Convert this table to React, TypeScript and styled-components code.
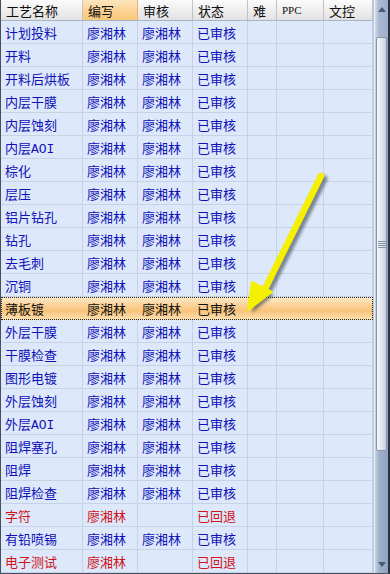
import React from 'react';
import styled, { createGlobalStyle, css } from 'styled-components';

const GlobalStyle = createGlobalStyle`
  html, body {
    margin: 0;
    padding: 0;
    background: #ffffff;
  }
  #root {
    width: 390px;
    height: 574px;
  }
`;

type Tone = 'blue' | 'red' | 'dark';

interface ProcessRow {
  name: string;
  writer: string;
  checker: string;
  status: string;
  tone: Tone;
}

const ROWS: ProcessRow[] = [
  { name: '计划投料', writer: '廖湘林', checker: '廖湘林', status: '已审核', tone: 'blue' },
  { name: '开料', writer: '廖湘林', checker: '廖湘林', status: '已审核', tone: 'blue' },
  { name: '开料后烘板', writer: '廖湘林', checker: '廖湘林', status: '已审核', tone: 'blue' },
  { name: '内层干膜', writer: '廖湘林', checker: '廖湘林', status: '已审核', tone: 'blue' },
  { name: '内层蚀刻', writer: '廖湘林', checker: '廖湘林', status: '已审核', tone: 'blue' },
  { name: '内层AOI', writer: '廖湘林', checker: '廖湘林', status: '已审核', tone: 'blue' },
  { name: '棕化', writer: '廖湘林', checker: '廖湘林', status: '已审核', tone: 'blue' },
  { name: '层压', writer: '廖湘林', checker: '廖湘林', status: '已审核', tone: 'blue' },
  { name: '铝片钻孔', writer: '廖湘林', checker: '廖湘林', status: '已审核', tone: 'blue' },
  { name: '钻孔', writer: '廖湘林', checker: '廖湘林', status: '已审核', tone: 'blue' },
  { name: '去毛刺', writer: '廖湘林', checker: '廖湘林', status: '已审核', tone: 'blue' },
  { name: '沉铜', writer: '廖湘林', checker: '廖湘林', status: '已审核', tone: 'blue' },
  { name: '薄板镀', writer: '廖湘林', checker: '廖湘林', status: '已审核', tone: 'dark' },
  { name: '外层干膜', writer: '廖湘林', checker: '廖湘林', status: '已审核', tone: 'blue' },
  { name: '干膜检查', writer: '廖湘林', checker: '廖湘林', status: '已审核', tone: 'blue' },
  { name: '图形电镀', writer: '廖湘林', checker: '廖湘林', status: '已审核', tone: 'blue' },
  { name: '外层蚀刻', writer: '廖湘林', checker: '廖湘林', status: '已审核', tone: 'blue' },
  { name: '外层AOI', writer: '廖湘林', checker: '廖湘林', status: '已审核', tone: 'blue' },
  { name: '阻焊塞孔', writer: '廖湘林', checker: '廖湘林', status: '已审核', tone: 'blue' },
  { name: '阻焊', writer: '廖湘林', checker: '廖湘林', status: '已审核', tone: 'blue' },
  { name: '阻焊检查', writer: '廖湘林', checker: '廖湘林', status: '已审核', tone: 'blue' },
  { name: '字符', writer: '廖湘林', checker: '', status: '已回退', tone: 'red' },
  { name: '有铅喷锡', writer: '廖湘林', checker: '廖湘林', status: '已审核', tone: 'blue' },
  { name: '电子测试', writer: '廖湘林', checker: '', status: '已回退', tone: 'red' },
];

const HEADERS = ['工艺名称', '编写', '审核', '状态', '难', 'PPC', '文控'];
const COLUMNS = '82px 55px 55px 55px 29px 47px 49px';

const toneColor: Record<Tone, string> = {
  blue: '#1010b8',
  red: '#d0121a',
  dark: '#111111',
};

const Frame = styled.div`
  position: relative;
  width: 390px;
  height: 574px;
  box-sizing: border-box;
  border-left: 1px solid #46505e;
  border-right: 2px solid #2c3440;
  border-bottom: 1px solid #46505e;
  display: flex;
  overflow: hidden;
  background: #dde9fb;
  font-family: 'Liberation Mono', 'Noto Sans CJK SC', sans-serif;
  font-size: 13px;
`;

const Grid = styled.div`
  flex: 1;
  display: flex;
  flex-direction: column;
  border-right: 1px solid #b8c6dc;
`;

const HeaderRow = styled.div`
  display: grid;
  grid-template-columns: ${COLUMNS};
  height: 21px;
  box-sizing: border-box;
  border-bottom: 1px solid #a9b4c2;
  background: linear-gradient(#fbfbfb, #ececec 60%, #e2e2e2);
`;

const HeaderCell = styled.div<{ $active?: boolean; $latin?: boolean }>`
  display: flex;
  align-items: center;
  padding-left: 5px;
  box-sizing: border-box;
  border-right: 1px solid #c2c2c2;
  color: #101010;
  font-size: ${({ $latin }) => ($latin ? '11px' : '13px')};
  font-family: ${({ $latin }) =>
    $latin ? "'Liberation Serif', serif" : "'Noto Sans CJK SC', sans-serif"};
  white-space: nowrap;
  overflow: hidden;
  ${({ $active }) =>
    $active &&
    css`
      background: linear-gradient(#fde6bd, #fbd393 55%, #f8c77a);
      border-right-color: #e2b56c;
    `}
`;

const Row = styled.div<{ $selected?: boolean }>`
  display: grid;
  grid-template-columns: ${COLUMNS};
  height: 23px;
  box-sizing: border-box;
  ${({ $selected }) =>
    $selected &&
    css`
      background: linear-gradient(#feeacb, #fbd39a 35%, #f8c37a 60%, #fde0b4);
      outline: 1px dotted #222;
      outline-offset: -1px;
    `}
`;

const Cell = styled.div<{ $tone: Tone; $selected?: boolean }>`
  display: flex;
  align-items: center;
  padding-left: 4px;
  box-sizing: border-box;
  border-right: 1px solid ${({ $selected }) => ($selected ? 'transparent' : '#c6d3e7')};
  border-bottom: 1px solid ${({ $selected }) => ($selected ? 'transparent' : '#c6d3e7')};
  color: ${({ $tone }) => toneColor[$tone]};
  white-space: nowrap;
  overflow: hidden;
`;

const ScrollBar = styled.div`
  width: 16px;
  display: flex;
  flex-direction: column;
  background: linear-gradient(90deg, #c9d3e2, #9fb1cc 30%, #8fa3c3);
  border-left: 1px solid #eef2f8;
`;

const ArrowButton = styled.div`
  height: 37px;
  display: flex;
  align-items: flex-start;
  justify-content: center;
  padding-top: 7px;
  box-sizing: border-box;
  background: linear-gradient(90deg, #d4dce8, #a9b9d2 30%, #9cafcb);
`;

const Thumb = styled.div`
  height: 414px;
  margin: 0 1px;
  box-sizing: border-box;
  border: 1px solid #8696b0;
  border-radius: 2px;
  background: linear-gradient(90deg, #f5f7fb, #e4e9f1 45%, #c8d1df);
  display: flex;
  align-items: center;
  justify-content: center;
`;

const Grip = styled.div`
  width: 8px;
  height: 7px;
  background: repeating-linear-gradient(#8794a8 0 1px, transparent 1px 2px);
`;

const Track = styled.div`
  flex: 1;
  display: flex;
  align-items: flex-end;
  justify-content: center;
  padding-bottom: 6px;
`;

const Pointer = styled.svg`
  position: absolute;
  left: 238px;
  top: 166px;
  pointer-events: none;
`;

const UpTriangle = () => (
  <svg width="8" height="5" viewBox="0 0 8 5">
    <path d="M0 5 L4 0 L8 5 Z" fill="#4a5a74" />
  </svg>
);

const DownTriangle = () => (
  <svg width="8" height="5" viewBox="0 0 8 5">
    <path d="M0 0 L8 0 L4 5 Z" fill="#4a5a74" />
  </svg>
);

const App: React.FC = () => {
  return (
    <>
      <GlobalStyle />
      <Frame>
        <Grid>
          <HeaderRow>
            {HEADERS.map((h, i) => (
              <HeaderCell key={h} $active={i === 1} $latin={h === 'PPC'}>
                {h}
              </HeaderCell>
            ))}
          </HeaderRow>
          {ROWS.map((r, i) => {
            const selected = r.tone === 'dark';
            const cells = [r.name, r.writer, r.checker, r.status, '', '', ''];
            return (
              <Row key={i} $selected={selected}>
                {cells.map((c, j) => (
                  <Cell key={j} $tone={r.tone} $selected={selected}>
                    {c}
                  </Cell>
                ))}
              </Row>
            );
          })}
        </Grid>
        <ScrollBar>
          <ArrowButton>
            <UpTriangle />
          </ArrowButton>
          <Thumb>
            <Grip />
          </Thumb>
          <Track>
            <DownTriangle />
          </Track>
        </ScrollBar>
        {/* yellow pointer drawn over the grid */}
        <Pointer width="100" height="160" viewBox="0 0 100 160">
          <defs>
            <filter id="soft" x="-30%" y="-30%" width="160%" height="160%">
              <feGaussianBlur stdDeviation="1.6" />
            </filter>
          </defs>
          <g transform="translate(3 3)" filter="url(#soft)" opacity="0.55">
            <path d="M82 10 L26 123" stroke="#2a3040" strokeWidth="7" strokeLinecap="round" />
            <path d="M14 117 L32 126 L10 144 Z" fill="#2a3040" />
          </g>
          <path d="M82 10 L26 123" stroke="#f4f000" strokeWidth="6.5" strokeLinecap="round" />
          <path d="M13 116 L33 126 L9 144 Z" fill="#f4f000" stroke="#f4f000" strokeWidth="2" strokeLinejoin="round" />
        </Pointer>
      </Frame>
    </>
  );
};

export default App;
